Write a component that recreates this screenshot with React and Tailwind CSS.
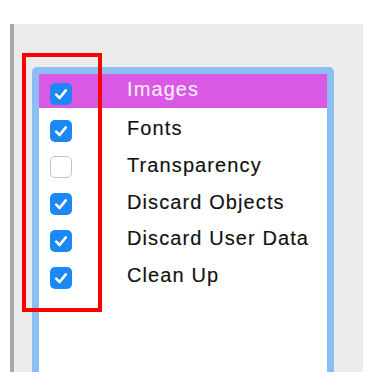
import React from "react";

const items = [
  { label: "Images", checked: true },
  { label: "Fonts", checked: true },
  { label: "Transparency", checked: false },
  { label: "Discard Objects", checked: true },
  { label: "Discard User Data", checked: true },
  { label: "Clean Up", checked: true },
];

function Box({ checked }) {
  if (!checked) {
    return (
      <div className="w-[22px] h-[22px] rounded-[5px] bg-white border-[1.5px] border-[#c4c4c4] shrink-0" />
    );
  }
  return (
    <div className="w-[22px] h-[22px] rounded-[5px] bg-[#1c88f5] shrink-0 flex items-center justify-center">
      <svg width="22" height="22" viewBox="0 0 22 22" fill="none">
        <path d="M6.2 11.6 L9.6 15 L15.8 7.4" stroke="white" strokeWidth="2.6" strokeLinecap="round" strokeLinejoin="round" />
      </svg>
    </div>
  );
}

export default function App() {
  return (
    <div className="relative w-[379px] h-[389px] bg-white overflow-hidden font-['Liberation_Sans',Arial,sans-serif]">
      <div className="mt-[24px] ml-[10px] w-[353px] h-[348px] bg-[#ececec] border-l-4 border-[#a9a9a9] overflow-hidden pt-[43px] pl-[18px]">
        <div className="w-[302px] h-[330px] rounded-[5px] border-[7px] border-[#8bbff3] bg-white">
          {items.map((it, i) =>
            i === 0 ? (
              <div key={it.label} className="h-[34px] bg-[#d958e4] flex items-start">
                <div className="ml-[11px] mt-[9px]">
                  <Box checked={it.checked} />
                </div>
                <span className="ml-[55px] mt-[5px] text-[20px] leading-[20px] tracking-[1.1px] text-[#fbeafc] [-webkit-text-stroke:0.15px_#fbeafc]">
                  {it.label}
                </span>
              </div>
            ) : (
              <div key={it.label} className="h-[36.8px] flex items-start">
                <div className="ml-[11px] mt-[11.5px]">
                  <Box checked={it.checked} />
                </div>
                <span className="ml-[55px] mt-[10px] text-[20px] leading-[20px] tracking-[1.1px] text-[#111111] [-webkit-text-stroke:0.15px_#111111]">
                  {it.label}
                </span>
              </div>
            )
          )}
        </div>
      </div>
      <div className="absolute left-[22px] top-[53px] w-[80px] h-[259px] border-4 border-[#ff0000]" />
    </div>
  );
}
